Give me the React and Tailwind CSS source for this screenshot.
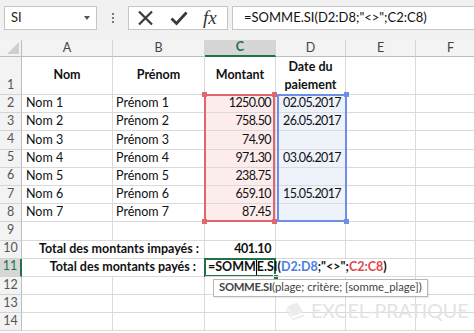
import React from 'react'

const FONT = { fontFamily: 'Lato, "Open Sans", Arial, sans-serif' }

const GRID = 'grid grid-cols-[22px_91px_92px_71px_70px_70px_70px] grid-rows-[17px_38px_repeat(13,18.2px)]'

const data = [
    ['Nom 1', 'Prénom 1', '1250.00', '02.05.2017'],
    ['Nom 2', 'Prénom 2', '758.50', '26.05.2017'],
    ['Nom 3', 'Prénom 3', '74.90', ''],
    ['Nom 4', 'Prénom 4', '971.30', '03.06.2017'],
    ['Nom 5', 'Prénom 5', '238.75', ''],
    ['Nom 6', 'Prénom 6', '659.10', '15.05.2017'],
    ['Nom 7', 'Prénom 7', '87.45', ''],
]

const letters = ['A', 'B', 'C', 'D', 'E', 'F']

function RowHead({ n, active }) {
    return (
        <div
            className={`flex items-end justify-center text-[12.5px] leading-none border-b border-[#d4d4d4] ${
                active
                    ? 'bg-[#d6d6d6] text-[#217346] border-r-2 border-r-[#217346]'
                    : 'bg-[#f3f3f3] text-[#555] border-r border-r-[#bdbdbd]'
            }`}
        >
            <span className="mb-[3px]">{n}</span>
        </div>
    )
}

function Cell({ children, className = '' }) {
    return (
        <div className={`flex items-center border-r border-b border-[#dadada] text-[12.5px] text-[#111] ${className}`}>
            {children}
        </div>
    )
}

function Corner({ pos, color }) {
    return <span className={`absolute w-[5px] h-[5px] ${pos} ${color}`} />
}

export default function App() {
    return (
        <div className="w-[474px] h-[333px] overflow-hidden bg-white" style={FONT}>
            {/* formula bar */}
            <div className="h-[40px] bg-[#f1f1f1] flex items-start pt-[6px] pl-[4px] gap-[4px]">
                <div className="w-[93px] h-[24px] bg-white border border-[#c6c6c6] flex items-center justify-between pl-[6px] pr-[6px]">
                    <span className="text-[13px] text-[#222]">SI</span>
                    <span className="w-0 h-0 border-l-[3px] border-r-[3px] border-t-[4px] border-l-transparent border-r-transparent border-t-[#555]" />
                </div>
                <div className="w-[23px] h-[24px] flex flex-col items-center justify-center gap-[2px]">
                    <span className="w-[2px] h-[2px] bg-[#777]" />
                    <span className="w-[2px] h-[2px] bg-[#777]" />
                    <span className="w-[2px] h-[2px] bg-[#777]" />
                </div>
                <div className="w-[100px] h-[24px] bg-white border border-[#c6c6c6] flex items-center pl-[8px] gap-[15px]">
                    <svg width="18" height="16" viewBox="0 0 18 16">
                        <path d="M2 1.5 L15 14.5 M15 1.5 L2 14.5" stroke="#3a3a3a" strokeWidth="2.2" fill="none" />
                    </svg>
                    <svg width="18" height="16" viewBox="0 0 18 16">
                        <path d="M1.5 8.5 L6.5 13.5 L16.5 2.5" stroke="#3a3a3a" strokeWidth="2.8" fill="none" />
                    </svg>
                    <span className="text-[19px] italic text-[#333] leading-none -mt-[2px]" style={{ fontFamily: '"Liberation Serif", serif' }}>
                        fx
                    </span>
                </div>
                <div className="flex-1 h-[24px] bg-white border border-r-0 border-[#c6c6c6] flex items-center pl-[11px] text-[13px] text-[#111] whitespace-nowrap">
                    =SOMME.SI(D2:D8;"&lt;&gt;";C2:C8)
                </div>
            </div>

            {/* sheet */}
            <div className="relative">
                <div className={GRID}>
                    {/* column headers */}
                    <div className="bg-[#f3f3f3] border-r border-b border-[#bdbdbd] flex items-end justify-end p-[2px]">
                        <svg width="12" height="12" viewBox="0 0 12 12">
                            <path d="M12 0 L12 12 L0 12 Z" fill="#cfcfcf" />
                        </svg>
                    </div>
                    {letters.map((l) => (
                        <div
                            key={l}
                            className={`flex items-center justify-center text-[12.5px] border-r border-[#d4d4d4] ${
                                l === 'C'
                                    ? 'bg-[#d6d6d6] text-[#217346] font-bold border-b-2 border-b-[#217346]'
                                    : 'bg-[#f3f3f3] text-[#444] border-b border-b-[#bdbdbd]'
                            }`}
                        >
                            {l}
                        </div>
                    ))}

                    {/* row 1 */}
                    <RowHead n={1} />
                    <Cell className="justify-center font-bold">Nom</Cell>
                    <Cell className="justify-center font-bold">Prénom</Cell>
                    <Cell className="justify-center font-bold">Montant</Cell>
                    <Cell className="justify-center font-bold text-center leading-[18px]">Date du paiement</Cell>
                    <Cell />
                    <Cell />

                    {/* data rows */}
                    {data.map(([nom, prenom, montant, date], i) => (
                        <React.Fragment key={nom}>
                            <RowHead n={i + 2} />
                            <Cell className="pl-[4px] whitespace-nowrap">{nom}</Cell>
                            <Cell className="pl-[3px] whitespace-nowrap">{prenom}</Cell>
                            <Cell className="justify-end pr-[4px] bg-[#fdecec] tracking-[-0.6px]">{montant}</Cell>
                            <Cell className="justify-end pr-[4px] bg-[#eef2fb] tracking-[-0.6px]">{date}</Cell>
                            <Cell />
                            <Cell />
                        </React.Fragment>
                    ))}

                    {/* row 9 */}
                    <RowHead n={9} />
                    <Cell /><Cell /><Cell /><Cell /><Cell /><Cell />

                    {/* row 10 */}
                    <RowHead n={10} />
                    <Cell className="col-span-2 justify-end pr-[5px] font-bold whitespace-nowrap">Total des montants impayés :</Cell>
                    <Cell className="justify-end pr-[4px] font-bold tracking-[-0.4px]">401.10</Cell>
                    <Cell /><Cell /><Cell />

                    {/* row 11 */}
                    <RowHead n={11} active />
                    <Cell className="col-span-2 justify-end pr-[8px] font-bold whitespace-nowrap">Total des montants payés :</Cell>
                    <Cell className="col-span-3 pl-[3px] font-bold whitespace-nowrap relative z-10">
                        <span>=SOMM</span>
                        <span className="inline-block w-px h-[15px] bg-black" />
                        <span>E.SI(</span>
                        <span className="text-[#4a7ee0]">D2:D8</span>
                        <span>;"&lt;&gt;";</span>
                        <span className="text-[#e0474c]">C2:C8</span>
                        <span>)</span>
                    </Cell>
                    <Cell />

                    {/* rows 12-14 */}
                    {[12, 13, 14].map((n) => (
                        <React.Fragment key={n}>
                            <RowHead n={n} />
                            <Cell /><Cell /><Cell /><Cell /><Cell /><Cell />
                        </React.Fragment>
                    ))}
                </div>

                {/* overlays: ranges, active cell, tooltip */}
                <div className={`${GRID} absolute inset-0 pointer-events-none`}>
                    <div className="col-start-4 row-start-3 row-span-7 relative">
                        <div className="absolute -left-[1px] -top-[1px] right-[1px] bottom-0 border-2 border-[#e0676b]" />
                        <Corner pos="-left-[3px] -top-[3px]" color="bg-[#e0676b]" />
                        <Corner pos="-right-[1px] -top-[3px]" color="bg-[#e0676b]" />
                        <Corner pos="-left-[3px] -bottom-[2px]" color="bg-[#e0676b]" />
                        <Corner pos="-right-[1px] -bottom-[2px]" color="bg-[#e0676b]" />
                    </div>
                    <div className="col-start-5 row-start-3 row-span-7 relative">
                        <div className="absolute left-[1px] -top-[1px] -right-[1px] bottom-0 border-2 border-[#6f8fe6]" />
                        <Corner pos="-right-[3px] -top-[3px]" color="bg-[#6f8fe6]" />
                        <Corner pos="-right-[3px] -bottom-[2px]" color="bg-[#6f8fe6]" />
                    </div>
                    <div className="col-start-4 row-start-12 relative">
                        <div className="absolute -left-[1px] -top-[1px] right-0 bottom-0 border-2 border-[#217346]" />
                        <span className="absolute -right-[3px] -bottom-[3px] w-[6px] h-[6px] bg-[#217346] border border-white" />
                    </div>
                    <div className="col-start-4 row-start-13 relative">
                        <div className="absolute left-[8px] top-[2px] h-[18px] px-[5px] bg-white border border-[#b8b8b8] flex items-center whitespace-nowrap text-[11.3px] text-[#444] shadow-[1px_1px_1px_rgba(0,0,0,0.08)]">
                            <span className="font-bold tracking-[-0.3px]">SOMME.SI</span>
                            <span>(plage; critère; [somme_plage])</span>
                        </div>
                    </div>
                </div>

                {/* watermark */}
                <div className="absolute left-[284px] top-[256px] flex items-center gap-[4px] pointer-events-none whitespace-nowrap">
                    <svg width="23" height="22" viewBox="0 0 24 22">
                        <path d="M3 6 L14 2 L20 12 L9 17 Z" fill="#ececec" />
                        <path d="M2 11 L3 8 L9 19 L21 14 L20 17 L9 21 Z" fill="#ececec" />
                    </svg>
                    <span className="text-[19.5px] text-[#e3e3e3]" style={{ fontFamily: 'Lato, sans-serif' }}>
                        EXCEL-PRATIQUE
                    </span>
                </div>
            </div>
        </div>
    )
}
